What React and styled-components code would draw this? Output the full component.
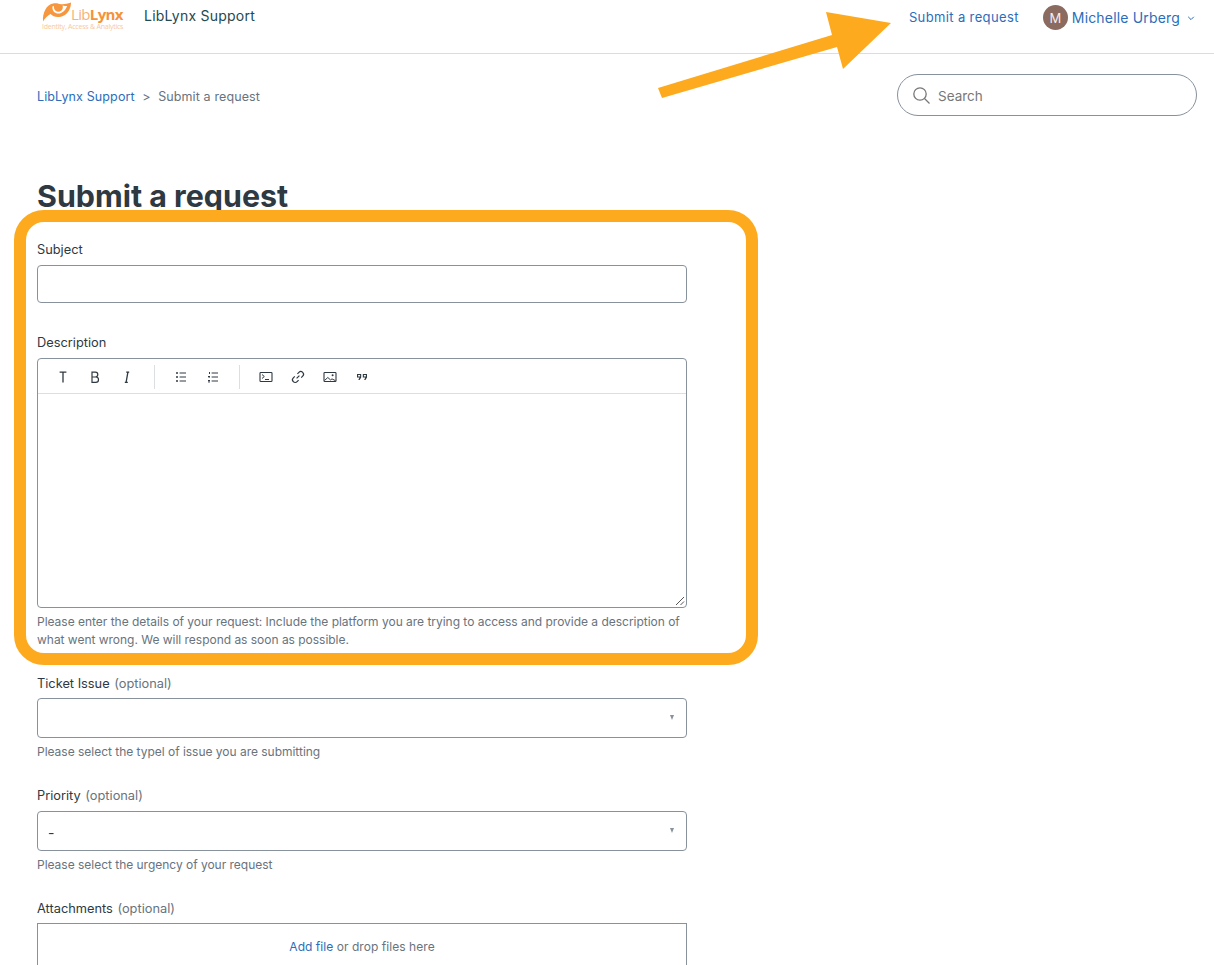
import React from "react";
import styled, { createGlobalStyle } from "styled-components";

const Global = createGlobalStyle`
  html, body { margin: 0; padding: 0; background: #fff; height: 965px; overflow: hidden; }
  body { font-family: Inter, "Noto Sans", sans-serif; color: #2f3941; font-size: 13px; position: relative; }
  * { box-sizing: border-box; }
`;

const Page = styled.div`
  position: relative;
  width: 1214px;
  height: 965px;
  overflow: hidden;
`;
const Header = styled.header`
  height: 54px;
  border-bottom: 1px solid #dcdcdc;
  padding: 0 19px 0 42px;
  display: flex;
  justify-content: space-between;
  align-items: flex-start;
`;
const Brand = styled.div`
  display: flex;
  align-items: flex-start;
  gap: 19px;
`;
const Logo = styled.div`
  width: 83px;
  height: 31px;
  display: flex;
  flex-direction: column;
`;
const LogoTop = styled.div`
  display: flex;
  align-items: flex-start;
  height: 22px;
  padding-top: 2px;
`;
const LogoWord = styled.span`
  font-family: "Open Sans", sans-serif;
  font-size: 15px;
  line-height: 15px;
  letter-spacing: -0.65px;
  color: #f6b27b;
  margin-top: 5px;
  b { color: #f5923a; font-weight: 700; }
`;
const LogoTag = styled.span`
  font-family: "Open Sans", sans-serif;
  font-size: 7px;
  line-height: 9px;
  letter-spacing: -0.23px;
  color: #f8c9a0;
  white-space: nowrap;
`;
const BrandName = styled.span`
  font-size: 14px;
  line-height: 17px;
  margin-top: 7px;
  color: #24494f;
  letter-spacing: 0.24px;
`;
const Nav = styled.nav`
  display: flex;
  align-items: center;
  height: 35px;
  font-size: 13px;
  color: #2a6ebb;
`;
const NavLink = styled.a`
  color: #2a6ebb;
  margin-right: 24px;
  margin-top: -2px;
  letter-spacing: 0.37px;
`;
const Avatar = styled.span`
  width: 25px;
  height: 25px;
  border-radius: 50%;
  background: #8b6a5f;
  color: #f4eeec;
  font-size: 13px;
  display: flex;
  align-items: center;
  justify-content: center;
  margin-right: 4px;
`;
const UserName = styled.span`
  font-size: 14px;
  letter-spacing: 0.17px;
  margin-right: 7px;
  margin-top: -1px;
`;
const SubBar = styled.div`
  display: flex;
  justify-content: space-between;
  align-items: center;
  padding: 20px 17px 0 37px;
`;
const Crumbs = styled.div`
  display: flex;
  gap: 7.5px;
  padding-top: 2px;
  font-size: 12.5px;
  letter-spacing: 0.12px;
  color: #68737d;
  a { color: #2a6ebb; }
`;
const SearchBox = styled.div`
  width: 300px;
  height: 42px;
  border: 1px solid #87929d;
  border-radius: 21px;
  display: flex;
  align-items: center;
  gap: 7px;
  padding-left: 14px;
  font-size: 13.5px;
  color: #777;
`;
const SearchText = styled.span`
  padding-top: 2px;
`;
const Main = styled.main`
  padding: 61px 0 0 37px;
  width: 687px;
`;
const Title = styled.h1`
  margin: 0 0 25px;
  font-size: 30.4px;
  line-height: 38px;
  font-weight: 700;
  color: #2f3941;
`;
const Field = styled.div`
  margin-bottom: ${p => p.$gap}px;
`;
const Label = styled.label`
  display: block;
  font-size: 12.8px;
  line-height: 20px;
  margin-bottom: ${p => (p.$tight ? 4 : 5)}px;
  color: #2f3941;
  span { color: #68737d; margin-left: 1px; }
`;
const Input = styled.div`
  height: 38px;
  border: 1px solid #87929d;
  border-radius: 4px;
`;
const Editor = styled.div`
  height: 250px;
  border: 1px solid #87929d;
  border-radius: 4px;
  position: relative;
`;
const Toolbar = styled.div`
  height: 35px;
  border-bottom: 1px solid #dcdfe2;
  display: flex;
  align-items: center;
  padding: 2px 0 0 9px;
  color: #2f3941;
`;
const ToolGroup = styled.div`
  display: flex;
  align-items: center;
  padding-right: ${p => p.$pad}px;
  margin-right: 10px;
  height: 24px;
  border-right: ${p => (p.$last ? "none" : "1px solid #dcdfe2")};
`;
const Tool = styled.span`
  width: 32px;
  height: 24px;
  display: flex;
  align-items: center;
  justify-content: center;
`;
const Grip = styled.svg`
  position: absolute;
  right: 1px;
  bottom: 1px;
`;
const Hint = styled.div`
  font-size: 12px;
  line-height: 18px;
  color: #68737d;
  margin-top: 5px;
  letter-spacing: -0.02px;
`;
const Select = styled.div`
  height: 40px;
  border: 1px solid #87929d;
  border-radius: 4px;
  display: flex;
  align-items: center;
  justify-content: space-between;
  padding: 0 12px 0 10px;
  font-size: 14px;
  color: #2f3941;
`;
const SelectValue = styled.span`
  padding-top: 3px;
`;
const Caret = styled.span`
  width: 0;
  height: 0;
  border-left: 2.5px solid transparent;
  border-right: 2.5px solid transparent;
  border-top: 5px solid #87929d;
  margin-top: -2px;
`;
const Drop = styled.div`
  height: 80px;
  border: 1px solid #87929d;
  text-align: center;
  padding-top: 14px;
  font-size: 12px;
  line-height: 18px;
  color: #68737d;
  letter-spacing: 0.05px;
  a { color: #2a6ebb; }
`;
const Highlight = styled.div`
  position: absolute;
  left: 14px;
  top: 210px;
  width: 744px;
  height: 455px;
  border: 12px solid #fdaa1e;
  border-radius: 30px;
  pointer-events: none;
`;
const Arrow = styled.svg`
  position: absolute;
  left: 650px;
  top: 0;
`;

const LogoMark = () => (
  <svg width="29" height="20" viewBox="0 0 29 20">
    <path fill="#f6973f" d="M1 19.5 C0.5 11 4 3 11 1.5 C15 0.8 17 2 19 2.2 C22 2.4 25.5 1.8 29 0.5 C29 6 26.5 11 22 13.5 C17 16 11.5 15.5 8.6 12 C6 13.5 3 16 1 19.5 Z" />
    <path fill="#fff" d="M10.4 4.5 C10 9 13 11.6 16.5 11.5 C20 11.4 23.4 8.5 25 4.2 C26 3.6 22 4.4 20.6 3.6 C21.5 7 19.5 9.6 16.5 9.6 C13.8 9.6 11.6 7.6 12 4 Z" />
    <circle cx="16.5" cy="6" r="3.4" fill="#f6973f" />
  </svg>
);

const ICON = { fill: "none", stroke: "currentColor", strokeWidth: 1 };

const Icons = {
  T: <svg width="16" height="16" viewBox="0 0 16 16" {...ICON}><path d="M4.6 3.2h6.8M8 3.2V13.6" strokeWidth="1.3" /></svg>,
  B: <svg width="16" height="16" viewBox="0 0 16 16" {...ICON}><path d="M5 3.2h3.4a2.4 2.4 0 0 1 0 4.8H5zM5 8h3.8a2.7 2.7 0 0 1 0 5.4H5z" strokeWidth="1.2" /></svg>,
  I: <svg width="16" height="16" viewBox="0 0 16 16" {...ICON}><path d="M7.2 3.2h3M5.8 13.4h3M8.9 3.2 7.1 13.4" strokeWidth="1.3" /></svg>,
  UL: <svg width="16" height="16" viewBox="0 0 16 16" {...ICON}><path d="M6.6 4H13M6.6 8H13M6.6 12H13" /><g fill="currentColor" stroke="none"><circle cx="4" cy="4" r="1" /><circle cx="4" cy="8" r="1" /><circle cx="4" cy="12" r="1" /></g></svg>,
  OL: <svg width="16" height="16" viewBox="0 0 16 16" {...ICON}><path d="M6.6 4H13M6.6 8H13M6.6 12H13" /><g fill="currentColor" stroke="none"><rect x="4" y="3" width="1" height="2" /><rect x="3" y="7" width="2" height="1" /><rect x="3.6" y="8" width="1" height="1" /><rect x="3" y="11" width="2" height="1" /><rect x="3" y="12.4" width="2" height="1" /></g></svg>,
  Code: <svg width="16" height="16" viewBox="0 0 16 16" {...ICON}><rect x="2" y="3.5" width="12" height="9" rx=".8" strokeWidth="1.1" /><path d="M4 5.5 6.3 7.5 4 9.5M7 10.5h4" /></svg>,
  Link: <svg width="16" height="16" viewBox="0 0 16 16" {...ICON} strokeWidth="1.2"><path d="M6.6 9.4 9.4 6.6M7.4 4.8l1.5-1.5a2.5 2.5 0 0 1 3.8 3.8L11.2 8.6M4.8 7.4 3.3 8.9a2.5 2.5 0 0 0 3.8 3.8L8.6 11.2" /></svg>,
  Image: <svg width="16" height="16" viewBox="0 0 16 16" {...ICON}><rect x="2" y="3.5" width="12" height="9" rx=".8" strokeWidth="1.1" /><circle cx="10.6" cy="6.2" r="1" fill="currentColor" stroke="none" /><path d="m2.5 11.5 3.3-3 2.7 2.4 1.5-1 3.5 1.8" /></svg>,
  Quote: <svg width="16" height="16" viewBox="0 0 16 16" fill="currentColor"><path fillRule="evenodd" d="M3 5h4.2v3.6L5.6 11H4.3l1.2-2.4H3zM4.1 6v1.5h2V6zM8.8 5H13v3.6L11.4 11h-1.3l1.2-2.4H8.8zM9.9 6v1.5h2V6z" /></svg>,
};

export default function App() {
  return (
    <Page>
      <Global />
      <Header>
        <Brand>
          <Logo>
            <LogoTop>
              <LogoMark />
              <LogoWord>Lib<b>Lynx</b></LogoWord>
            </LogoTop>
            <LogoTag>Identity, Access &amp; Analytics</LogoTag>
          </Logo>
          <BrandName>LibLynx Support</BrandName>
        </Brand>
        <Nav>
          <NavLink>Submit a request</NavLink>
          <Avatar>M</Avatar>
          <UserName>Michelle Urberg</UserName>
          <svg width="8" height="8" viewBox="0 0 8 8" fill="none" stroke="currentColor" strokeWidth="1"><path d="M1.2 2.8 4 5.6l2.8-2.8" /></svg>
        </Nav>
      </Header>
      <SubBar>
        <Crumbs>
          <a>LibLynx Support</a>
          <span>&gt;</span>
          <span>Submit a request</span>
        </Crumbs>
        <SearchBox>
          <svg width="19" height="19" viewBox="0 0 19 19" fill="none" stroke="#777" strokeWidth="1.3"><circle cx="8" cy="8" r="6.2" /><path d="m12.5 12.5 5 5" /></svg>
          <SearchText>Search</SearchText>
        </SearchBox>
      </SubBar>
      <Main>
        <Title>Submit a request</Title>
        <Field $gap={30}>
          <Label>Subject</Label>
          <Input />
        </Field>
        <Field $gap={25}>
          <Label>Description</Label>
          <Editor>
            <Toolbar>
              <ToolGroup $pad={11}>
                <Tool>{Icons.T}</Tool>
                <Tool>{Icons.B}</Tool>
                <Tool>{Icons.I}</Tool>
              </ToolGroup>
              <ToolGroup $pad={10}>
                <Tool>{Icons.UL}</Tool>
                <Tool>{Icons.OL}</Tool>
              </ToolGroup>
              <ToolGroup $last $pad={0}>
                <Tool>{Icons.Code}</Tool>
                <Tool>{Icons.Link}</Tool>
                <Tool>{Icons.Image}</Tool>
                <Tool>{Icons.Quote}</Tool>
              </ToolGroup>
            </Toolbar>
            <Grip width="10" height="10" viewBox="0 0 10 10" stroke="#555" strokeWidth="1"><path d="M1 9 9 1M5.5 9 9 5.5" /></Grip>
          </Editor>
          <Hint>Please enter the details of your request: Include the platform you are trying to access and provide a description of what went wrong. We will respond as soon as possible.</Hint>
        </Field>
        <Field $gap={25}>
          <Label $tight>Ticket Issue <span>(optional)</span></Label>
          <Select><span /><Caret /></Select>
          <Hint>Please select the typel of issue you are submitting</Hint>
        </Field>
        <Field $gap={25}>
          <Label>Priority <span>(optional)</span></Label>
          <Select><SelectValue>-</SelectValue><Caret /></Select>
          <Hint>Please select the urgency of your request</Hint>
        </Field>
        <Field $gap={0}>
          <Label $tight>Attachments <span>(optional)</span></Label>
          <Drop><a>Add file</a> or drop files here</Drop>
        </Field>
      </Main>
      <Highlight />
      <Arrow width="250" height="100" viewBox="0 0 250 100">
        <path fill="#fdaa1e" d="M8 88 12 98 187 47 193 69 241 23 176 12 182 35Z" />
      </Arrow>
    </Page>
  );
}
